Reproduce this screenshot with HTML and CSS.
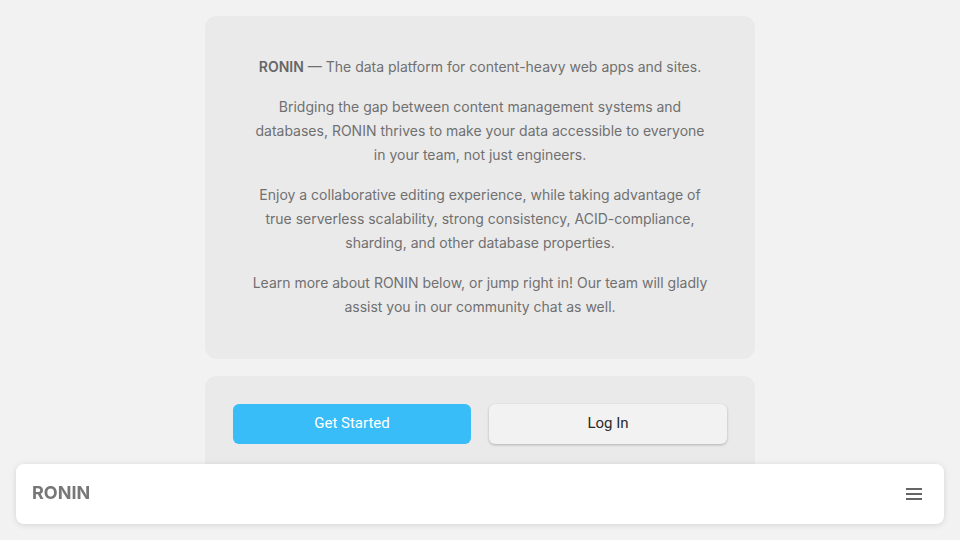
FILE: index.html
```html
<!DOCTYPE html>
<html lang="en">
<head>
<meta charset="utf-8">
<title>RONIN</title>
<link rel="stylesheet" href="styles.css">
</head>
<body>
<main class="page">
  <section class="card intro">
    <p><strong>RONIN</strong> — The data platform for content-heavy web apps and sites.</p>
    <p>Bridging the gap between content management systems and databases, RONIN thrives to make your data accessible to everyone in your team, not just engineers.</p>
    <p>Enjoy a collaborative editing experience, while taking advantage of true serverless scalability, strong consistency, ACID-compliance, sharding, and other database properties.</p>
    <p>Learn more about RONIN below, or jump right in! Our team will gladly assist you in our community chat as well.</p>
  </section>
  <section class="card actions">
    <a class="btn primary" href="#">Get Started</a>
    <a class="btn secondary" href="#">Log In</a>
  </section>
</main>
<nav class="navbar">
  <span class="logo">RONIN</span>
  <button class="menu" aria-label="Menu">
    <svg width="16" height="12" viewBox="0 0 16 12"><path d="M0 1h16M0 6h16M0 11h16" stroke="#333" stroke-width="1.5" fill="none"/></svg>
  </button>
</nav>
</body>
</html>
```
FILE: styles.css
```css
* { box-sizing: border-box; }
html, body { margin: 0; padding: 0; }
body {
  background: #f2f2f2;
  font-family: Inter, "Noto Sans", sans-serif;
  height: 540px;
  overflow: hidden;
}
.page {
  width: 550px;
  margin: 0 auto;
  padding-top: 16px;
  display: flex;
  flex-direction: column;
  gap: 17px;
}
.card {
  background: #eaeaea;
  border-radius: 12px;
}
.intro {
  padding: 39px 46px 40px;
  text-align: center;
  color: #707070;
  font-size: 14px;
  line-height: 24px;
}
.intro p { margin: 0 0 16px; }
.intro p:last-child { margin-bottom: 0; }
.intro strong { font-weight: 600; color: #666; }
.actions {
  padding: 28px;
  display: grid;
  grid-template-columns: 1fr 1fr;
  gap: 18px;
  height: 120px;
  align-items: start;
}
.btn {
  display: flex;
  align-items: center;
  justify-content: center;
  height: 40px;
  padding-bottom: 3px;
  border-radius: 6px;
  font-family: Roboto, "Liberation Sans", sans-serif;
  font-size: 15px;
  text-decoration: none;
}
.primary { background: #38bdf8; color: #fff; }
.secondary {
  background: #f2f2f2;
  color: #2a2a2a;
  box-shadow: 0 1px 3px rgba(0,0,0,0.18), 0 1px 2px rgba(0,0,0,0.08);
}
.navbar {
  position: fixed;
  left: 16px;
  right: 16px;
  bottom: 16px;
  height: 60px;
  background: #fff;
  border-radius: 8px;
  box-shadow: 0 1px 6px rgba(0,0,0,0.12);
  display: flex;
  align-items: center;
  justify-content: space-between;
  padding: 0 16px;
}
.logo {
  font-size: 18px;
  font-weight: 700;
  color: #777;
  padding-bottom: 3px;
}
.menu {
  background: none;
  border: 0;
  padding: 0 6px 0 0;
  display: flex;
  cursor: pointer;
}
```
